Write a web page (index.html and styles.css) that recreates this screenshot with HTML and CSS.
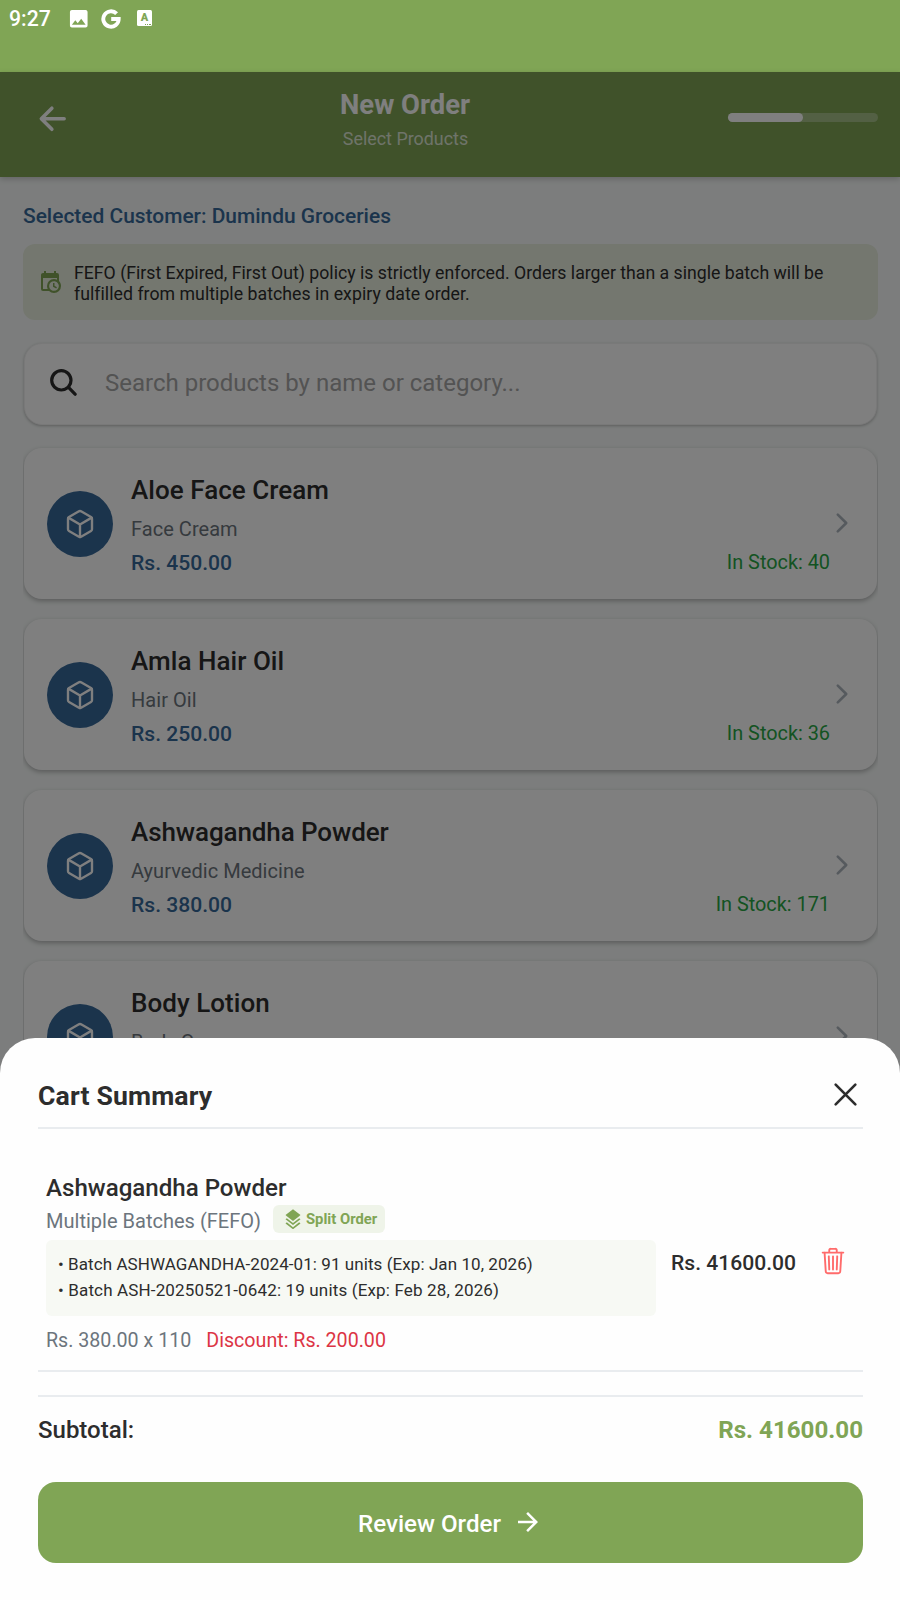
FILE: index.html
```html
<!DOCTYPE html>
<html lang="en">
<head>
<meta charset="utf-8">
<title>New Order</title>
<link rel="stylesheet" href="styles.css">
</head>
<body>
<svg class="defs" width="0" height="0" aria-hidden="true">
  <symbol id="cube" viewBox="0 0 512 512"><g fill="none" stroke="currentColor" stroke-width="38" stroke-linecap="round" stroke-linejoin="round"><path d="M448 341.37V170.61A32 32 0 00432.11 143l-152-88.46a47.94 47.94 0 00-48.24 0L79.89 143A32 32 0 0064 170.61v170.76A32 32 0 0079.89 369l152 88.46a48 48 0 0048.24 0l152-88.46A32 32 0 00448 341.37z"/><path d="M69 154l187 110 187-110M256 464V264"/></g></symbol>
  <symbol id="chevron" viewBox="0 0 512 512"><path d="M184 112l144 144-144 144" fill="none" stroke="currentColor" stroke-width="45" stroke-linecap="round" stroke-linejoin="round"/></symbol>
</svg>
<div class="screen">
  <div class="status">
    <span class="time">9:27</span>
    <svg class="st-photo" viewBox="0 0 24 24"><path fill="#fff" d="M21 19V5c0-1.100-.9-2-2-2H5c-1.100 0-2 .9-2 2v14c0 1.100.9 2 2 2h14c1.100 0 2-.9 2-2zM8.500 13.500l2.500 3.010L14.500 12l4.500 6H5l3.500-4.500z"/></svg>
    <svg class="st-g" viewBox="0 0 20 20"><path d="M15.600 4.700A7.700 7.700 0 1 0 17.700 10H10.200" fill="none" stroke="#fff" stroke-width="3.900"/></svg>
    <span class="st-a">A<i></i></span>
  </div>
  <div class="header">
    <svg class="back" viewBox="0 0 512 512"><path d="M244 400L100 256l144-144M120 256h292" fill="none" stroke="#fff" stroke-width="48" stroke-linecap="round" stroke-linejoin="round"/></svg>
    <div class="titles">
      <div class="h-title"><span>New Order</span></div>
      <div class="h-sub"><span>Select Products</span></div>
    </div>
    <div class="progress"><div class="progress-fill"></div></div>
  </div>
  <div class="content">
    <div class="customer"><span>Selected Customer: Dumindu Groceries</span></div>
    <div class="info">
      <svg class="info-icon" viewBox="0 0 24 24"><path fill="#80a555" d="M15 13h1.500v2.820l2.440 1.410-.75 1.300L15 16.690V13m4-5H5v11h4.670c-.43-.91-.67-1.930-.67-3a7 7 0 0 1 7-7c1.070 0 2.090.24 3 .67V8M5 21a2 2 0 0 1-2-2V5c0-1.110.89-2 2-2h1V1h2v2h8V1h2v2h1a2 2 0 0 1 2 2v6.100c1.240 1.260 2 2.990 2 4.900a7 7 0 0 1-7 7c-1.910 0-3.640-.76-4.900-2H5m11-9.850A4.850 4.850 0 0 0 11.150 16c0 2.680 2.170 4.850 4.850 4.850A4.850 4.850 0 0 0 20.850 16c0-2.680-2.170-4.850-4.850-4.850z"/></svg>
      <div class="info-text"><span>FEFO (First Expired, First Out) policy is strictly enforced. Orders larger than a single batch will be</span><br><span class="wide">fulfilled from multiple batches in expiry date order.</span></div>
    </div>
    <div class="search">
      <svg class="search-icon" viewBox="0 0 512 512"><path fill="#2d2d2d" d="M456.690 421.390L362.600 327.300a173.810 173.810 0 0034.840-104.580C397.440 126.380 319.060 48 222.720 48S48 126.380 48 222.720s78.380 174.720 174.720 174.720A173.810 173.810 0 00327.300 362.600l94.090 94.090a25 25 0 0035.300-35.300zM97.920 222.720a124.800 124.800 0 11124.800 124.800 124.950 124.950 0 01-124.800-124.800z"/></svg>
      <span class="placeholder">Search products by name or category...</span>
    </div>
    <div class="list">
      <div class="card">
        <div class="avatar"><svg><use href="#cube"/></svg></div>
        <div class="card-body">
          <div class="name"><span>Aloe Face Cream</span></div>
          <div class="cat"><span>Face Cream</span></div>
          <div class="row"><span class="price">Rs. 450.00</span><span class="stock">In Stock: 40</span></div>
        </div>
        <svg class="chev"><use href="#chevron"/></svg>
      </div>
      <div class="card">
        <div class="avatar"><svg><use href="#cube"/></svg></div>
        <div class="card-body">
          <div class="name"><span>Amla Hair Oil</span></div>
          <div class="cat"><span>Hair Oil</span></div>
          <div class="row"><span class="price">Rs. 250.00</span><span class="stock">In Stock: 36</span></div>
        </div>
        <svg class="chev"><use href="#chevron"/></svg>
      </div>
      <div class="card">
        <div class="avatar"><svg><use href="#cube"/></svg></div>
        <div class="card-body">
          <div class="name tight"><span>Ashwagandha Powder</span></div>
          <div class="cat"><span>Ayurvedic Medicine</span></div>
          <div class="row"><span class="price">Rs. 380.00</span><span class="stock">In Stock: 171</span></div>
        </div>
        <svg class="chev"><use href="#chevron"/></svg>
      </div>
      <div class="card">
        <div class="avatar"><svg><use href="#cube"/></svg></div>
        <div class="card-body">
          <div class="name"><span>Body Lotion</span></div>
          <div class="cat"><span>Body Care</span></div>
        </div>
        <svg class="chev"><use href="#chevron"/></svg>
      </div>
    </div>
  </div>
  <div class="dim"></div>
  <div class="sheet">
    <div class="sheet-head">
      <span class="sheet-title">Cart Summary</span>
      <svg class="close" viewBox="0 0 512 512"><path d="M368 368L144 144M368 144L144 368" fill="none" stroke="#2d2d2d" stroke-width="30" stroke-linecap="round"/></svg>
    </div>
    <div class="item">
      <div class="item-main">
        <div class="item-name"><span>Ashwagandha Powder</span></div>
        <div class="item-meta">
          <span class="multi">Multiple Batches (FEFO)</span>
          <div class="badge">
            <svg viewBox="0 0 24 24"><path fill="#80a555" d="M12 0L3 7l1.630 1.270L12 14l7.360-5.730L21 7l-9-7m7.370 10.730L12 16.470l-7.380-5.730L3 12l9 7 9-7-1.630-1.270m0 5L12 21.470l-7.380-5.730L3 17l9 7 9-7-1.630-1.270z"/></svg>
            <span>Split Order</span>
          </div>
        </div>
        <div class="batches">
          <div><span>• Batch ASHWAGANDHA-2024-01: 91 units (Exp: Jan 10, 2026)</span></div>
          <div><span class="wide">• Batch ASH-20250521-0642: 19 units (Exp: Feb 28, 2026)</span></div>
        </div>
        <div class="calc"><span>Rs. 380.00 x 110</span><span class="discount">Discount: Rs. 200.00</span></div>
      </div>
      <span class="item-price">Rs. 41600.00</span>
      <svg class="trash" viewBox="0 0 512 512"><g fill="none" stroke="#ff6b6b" stroke-width="32" stroke-linecap="round" stroke-linejoin="round"><path d="M112 112l20 320c.95 18.490 14.400 32 32 32h184c17.670 0 30.870-13.510 32-32l20-320M80 112h352M192 112V72a23.930 23.930 0 0124-24h80a23.930 23.930 0 0124 24v40M256 176v224M184 176l8 224M328 176l-8 224"/></g></svg>
    </div>
    <div class="footer">
      <div class="subtotal"><span>Subtotal:</span><span class="total">Rs. 41600.00</span></div>
      <div class="button">
        <span>Review Order</span>
        <svg viewBox="0 0 24 24"><path fill="#fff" d="M12 4l-1.410 1.410L16.170 11H4v2h12.170l-5.580 5.590L12 20l8-8z"/></svg>
      </div>
    </div>
  </div>
</div>
</body>
</html>
```
FILE: styles.css
```css
* { box-sizing: border-box; }
body { margin: 0; font-family: Roboto, sans-serif; color: #2d2d2d; }
svg { display: block; flex: none; }
span { white-space: nowrap; }
.defs { position: absolute; }
.screen { position: relative; width: 900px; height: 1600px; overflow: hidden; background: #f8fbfa; }

.status { height: 72px; background: #80a555; display: flex; align-items: flex-start; padding: 6px 0 0 9px; color: #fff; }
.time { font-size: 21.200px; line-height: 26px; font-weight: 500; width: 58px; }
.st-photo { width: 23.5px; height: 23.5px; margin-top: 1px; }
.st-g { width: 20px; height: 20px; margin: 2.500px 0 0 10.500px; }
.st-a { width: 15px; height: 16px; margin: 4px 0 0 16px; background: #fff; border-radius: 1.500px; color: #80a555; font-size: 11px; line-height: 15px; font-weight: 900; text-align: center; position: relative; }
.st-a i { position: absolute; right: 1px; bottom: 1px; width: 6px; height: 1.500px; background: repeating-linear-gradient(90deg, #80a555 0 1.300px, #fff 1.300px 2.200px); }

.header { height: 105px; background: #80a555; display: grid; grid-template-columns: 310px 190px 1fr; box-shadow: 0 2px 6px rgba(0,0,0,.2); position: relative; }
.back { width: 37.5px; height: 37.5px; margin: 28px 0 0 34px; }
.titles { padding-top: 17px; text-align: center; color: #fff; }
.h-title { font-size: 27.400px; line-height: 32px; font-weight: 700; }
.h-sub { font-size: 17.900px; line-height: 21px; margin-top: 7px; padding-left: 1px; color: rgba(255,255,255,.75); }
.progress { justify-self: end; width: 150px; height: 9px; margin: 41px 22px 0 0; border-radius: 5px; background: rgba(255,255,255,.3); }
.progress-fill { width: 50%; height: 9px; border-radius: 5px; background: #fff; }

.content { padding: 27px 22px 0 23px; }
.customer { font-size: 20.930px; line-height: 24px; font-weight: 500; color: #366899; }
.info { margin-top: 16px; height: 76px; border-radius: 12px; background: #e8eede; display: flex; padding-left: 15px; }
.info-icon { width: 24px; height: 24px; margin-top: 26px; }
.info-text { margin: 19px 0 0 12px; font-size: 17.700px; line-height: 21px; }
.info-text .wide { letter-spacing: .04px; }
.search { margin: 22.500px 1px 0; height: 82px; border-radius: 18px; background: #fff; border: 1px solid #f2f2f2; box-shadow: 0 1px 3px rgba(0,0,0,.25); display: flex; align-items: center; padding-left: 22px; }
.search-icon { width: 33px; height: 33px; margin-top: -2px; }
.placeholder { margin: -2px 0 0 25px; font-size: 24px; line-height: 28px; color: #a6a6a6; }

.list { margin-top: 15px; padding-top: 8px; display: flex; flex-direction: column; gap: 19.500px; overflow: hidden; }
.card { height: 151.500px; flex: none; border-radius: 18px; background: #fff; box-shadow: 0 2px 5px rgba(0,0,0,.28); display: flex; margin: 0 1px; padding-left: 23px; }
.avatar { width: 66px; height: 66px; border-radius: 50%; background: #366899; color: #fff; display: flex; align-items: center; justify-content: center; margin-top: 43px; }
.avatar svg { width: 32px; height: 32px; }
.card-body { margin-left: 18px; padding-top: 27.500px; width: 699px; }
.name { font-size: 26px; line-height: 30px; font-weight: 500; letter-spacing: .04px; }
.name.tight { letter-spacing: -.1px; }
.cat { font-size: 20px; line-height: 23px; margin-top: 13px; letter-spacing: .04px; color: #6c757d; }
.row { display: flex; justify-content: space-between; margin-top: 10px; line-height: 24px; }
.price { font-size: 21.100px; font-weight: 500; color: #366899; }
.stock { font-size: 19.850px; line-height: 23px; color: #28a745; }
.chev { width: 30px; height: 30px; margin: 60px 0 0 -3px; color: #adb5bd; }

.dim { position: absolute; left: 0; right: 0; top: 72px; bottom: 0; background: rgba(0,0,0,.5); }
.sheet { position: absolute; left: 0; right: 0; bottom: 0; height: 562px; background: #fefefe; border-radius: 35px 35px 0 0; padding: 43px 37px 0 38px; }
.sheet-head { height: 48px; border-bottom: 2px solid #e9ecef; display: flex; justify-content: space-between; }
.sheet-title { font-size: 26.600px; letter-spacing: .15px; line-height: 30px; font-weight: 700; }
.close { width: 45px; height: 45px; margin: -9px -4.500px 0 0; }

.item { height: 243px; border-bottom: 2px solid #e9ecef; padding: 45px 0 0 8px; display: flex; }
.item-main { width: 610px; }
.item-name { font-size: 24.100px; line-height: 28px; font-weight: 500; }
.item-meta { display: flex; align-items: flex-end; margin-top: 3px; height: 28px; }
.multi { font-size: 20.050px; line-height: 24px; color: #6c757d; width: 227px; }
.badge { width: 112px; height: 28px; border-radius: 6px; background: #eff4e9; display: flex; align-items: center; padding-left: 9.500px; color: #80a555; font-size: 14.800px; font-weight: 700; }
.badge svg { width: 20px; height: 20.500px; }
.badge span { margin-left: 3.500px; }
.batches { height: 76px; margin-top: 7px; padding: 11px 0 0 12px; border-radius: 6px; background: #f7f9f4; font-size: 17px; line-height: 26.250px; letter-spacing: .07px; }
.batches .wide { letter-spacing: .15px; }
.calc { display: flex; margin-top: 13px; font-size: 19.650px; line-height: 23px; color: #6c757d; }
.discount { color: #dc3545; margin-left: 15px; }
.item-price { width: 150px; margin: 77px 0 0 15px; font-size: 21.100px; line-height: 24px; font-weight: 500; }
.trash { width: 30px; height: 30px; margin: 72px 0 0 -3px; }

.footer { margin-top: 23px; border-top: 2px solid #e9ecef; padding-top: 19px; }
.subtotal { display: flex; justify-content: space-between; font-size: 24px; line-height: 28px; font-weight: 500; }
.total { font-size: 24.150px; font-weight: 700; color: #80a555; }
.button { height: 81px; margin-top: 38px; border-radius: 18px; background: #80a555; color: #fff; display: flex; align-items: center; font-size: 24.150px; font-weight: 500; padding: 2px 0 0 320px; }
.button svg { width: 30px; height: 30px; margin-left: 12px; margin-top: -4px; }
```
